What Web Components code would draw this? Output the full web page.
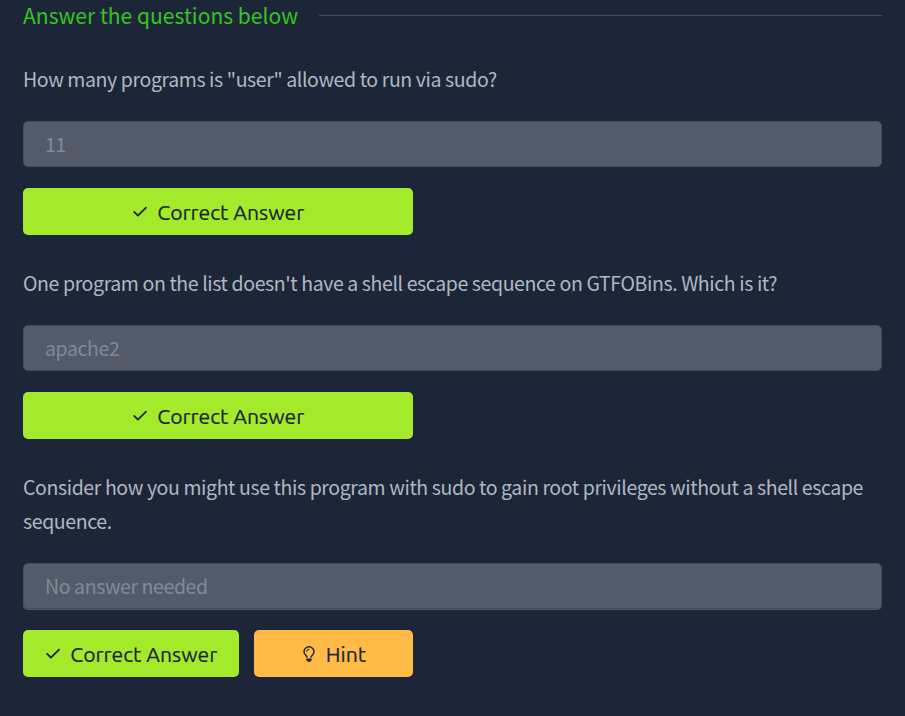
<!DOCTYPE html>
<html lang="en">
<head>
<meta charset="utf-8">
<title>Answer the questions below</title>
<style>
html{background:#1d2539}
body{margin:0;height:716px;overflow:hidden;background:#1d2539;font-family:"Noto Sans CJK SC","Noto Sans",sans-serif;color:#afb7c3}
</style>
</head>
<body>
<task-questions>
  <section-title slot="title">Answer the questions below</section-title>
  <question-item answer="11">How many programs is "user" allowed to run via sudo?</question-item>
  <question-item answer="apache2">One program on the list doesn't have a shell escape sequence on GTFOBins. Which is it?</question-item>
  <question-item answer="No answer needed" hint>Consider how you might use this program with sudo to gain root privileges without a shell escape sequence.</question-item>
</task-questions>
<script>
const define = (name, html, setup) => customElements.define(name, class extends HTMLElement {
  connectedCallback() {
    if (this.shadowRoot) return;
    const t = document.createElement('template');
    t.innerHTML = html;
    this.attachShadow({mode: 'open'}).append(t.content.cloneNode(true));
    if (setup) setup(this, this.shadowRoot);
  }
});

define('ui-icon', `
<style>:host{display:block;flex:none}svg{display:block;overflow:visible}
:host([name=check]) .bulb,:host([name=bulb]) .check{display:none}</style>
<svg class="check" width="14" height="11" viewBox="0 0 14 11" fill="none" stroke="#1a2430" stroke-width="1.8" stroke-linecap="round" stroke-linejoin="round"><path d="M1.2 5.9 4.9 9.6 13 1.6"/></svg>
<svg class="bulb" width="12" height="16" viewBox="0 0 12 16" fill="none" stroke="#1a2430" stroke-width="1.4" stroke-linecap="round" stroke-linejoin="round"><path d="M4 11.2C3.6 9.6 1 8.3 1 5.7a5 5 0 0 1 10 0c0 2.6-2.6 3.9-3 5.5"/><path d="M3.6 5.5A2.4 2.4 0 0 1 6 3.2" stroke-width="1"/><path d="M3.8 12.9h4.4v1.2L7.3 15.3H4.7L3.8 14.1z" fill="#1a2430" stroke-width=".8"/></svg>`);

define('action-button', `
<style>
:host{display:flex;align-items:center;justify-content:center;height:47px;box-sizing:border-box;padding-left:1px;border-radius:5px;background:#a3ea2a;color:#1a2430;gap:10.5px}
:host([tone=hint]){background:#ffbb45;gap:11px;padding-left:2px}
span{font:400 21.15px/47px Ubuntu,"Noto Sans",sans-serif;padding-top:2px;white-space:nowrap;-webkit-text-stroke:.2px currentColor}
</style><ui-icon></ui-icon><span><slot></slot></span>`,
(h, r) => r.querySelector('ui-icon').setAttribute('name', h.getAttribute('tone') === 'hint' ? 'bulb' : 'check'));

define('answer-field', `
<style>
:host{display:block}
input{display:block;width:100%;height:46px;box-sizing:border-box;padding:0 21px 2px;border:1px solid #434b5f;border-radius:5px;background:#535a69;font:inherit;font-size:19.5px;letter-spacing:-.4px;outline:0}
input::placeholder{color:#808a9d;opacity:1}
:host([last]) input{box-shadow:0 1px #535a69}
</style><input disabled>`);

define('section-title', `
<style>
:host{display:flex;align-items:center;gap:21px;height:30px;color:#36c51e;font-size:21.07px;line-height:30px;white-space:nowrap}
i{flex:1;height:1px;background:#434b5f;margin-top:1px}
</style><span><slot></slot></span><i></i>`);

define('question-item', `
<style>
:host{display:block;margin-bottom:31px}
p{margin:0 0 25px;font-size:19.5px;letter-spacing:-.395px;line-height:34px}
.actions{display:grid;grid-template-columns:390px;margin-top:21px;gap:15px}
:host([hint]) .actions{grid-template-columns:216px 159px}
</style><p><slot></slot></p><answer-field></answer-field>
<div class="actions"><action-button>Correct Answer</action-button></div>`,
(h, r) => {
  const field = r.querySelector('answer-field');
  field.shadowRoot.querySelector('input').placeholder = h.getAttribute('answer');
  if (h.hasAttribute('hint')) {
    field.setAttribute('last', '');
    const b = document.createElement('action-button');
    b.setAttribute('tone', 'hint');
    b.textContent = 'Hint';
    r.querySelector('.actions').append(b);
  }
});

define('task-questions', `
<style>
:host{display:block;padding:0 23px}
.list{padding-top:32px}
</style><slot name="title"></slot><div class="list"><slot></slot></div>`);
</script>
</body>
</html>
